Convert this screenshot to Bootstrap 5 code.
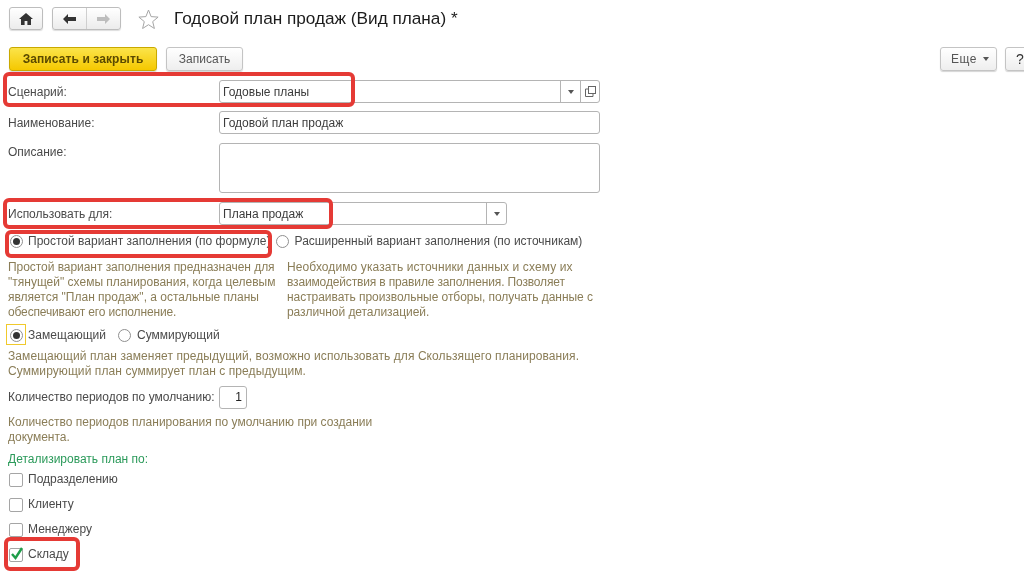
<!DOCTYPE html>
<html lang="ru">
<head>
<meta charset="utf-8">
<title>Годовой план продаж</title>
<link href="https://cdn.jsdelivr.net/npm/bootstrap@5.3.0/dist/css/bootstrap.min.css" rel="stylesheet">
<style>
html,body{height:577px;overflow:hidden;background:#fff}
body{font-family:"Liberation Sans",Arial,sans-serif;font-size:12px;color:#4a4a4a;line-height:15px}
.sheet{position:relative;width:1024px;height:577px;overflow:hidden;padding:7px 0 0 9px;filter:blur(.3px)}
.tool{height:23px;background:linear-gradient(#fff,#ececec);border:1px solid #bdbdbd;border-radius:3px;box-shadow:0 1px 1px #ddd}
.tool-home{width:34px}
.tool-nav{width:69px;margin-left:9px}
.tool-nav>div{flex:1 1 0}
.tool-nav>div+div{border-left:1px solid #cfcfcf}
.star-ico{margin-left:17px;margin-right:15px}
.form-title{font-size:17.2px;line-height:23px;color:#1c1c1c}
.cmd{margin-top:17px;height:24px}
.act{height:24px;border-radius:3px;border:1px solid #c4c4c4;background:linear-gradient(#fff,#eee);box-shadow:0 1px 1px #d5d5d5;color:#555;font-size:12px;padding:0}
.act-main{width:148px;background:linear-gradient(#fbe44a,#f5c800);border-color:#c9a900;color:#5b4a00;font-weight:700;letter-spacing:.1px}
.act-save{width:77px;margin-left:9px}
.act-more{width:57px;margin-left:auto;letter-spacing:.5px;padding-left:3px}
.act-help{width:30px;margin-left:8px;margin-right:-11px;color:#333;font-size:14px}
.caret-mini{display:inline-block;border:3px solid transparent;border-top:4px solid #555;border-bottom:0;margin-left:6px;vertical-align:2px}
.pane{margin-left:-1px}
.fld{display:flex;width:592px}
.fld-label{width:211px;flex:none;padding-top:1px}
.box{border:1px solid #b4b4b4;border-radius:3px;background:#fff;padding:0 3px;color:#3c3c3c;display:flex;align-items:center;height:23px}
.box-wide{width:381px}
.box-mid{width:288px}
.box-tall{height:50px}
.box-num{width:28px;justify-content:flex-end;padding-right:4px;font-size:12px;color:#222}
.box-text{flex:1;padding-top:1px}
.box-btn{width:20px;height:21px;border-left:1px solid #b4b4b4;display:flex;align-items:center;justify-content:center}
.box-btn:last-child{margin-right:-3px}
.box-btn.btn-open{width:19px}
.r1{margin-top:9px;height:23px;align-items:center}
.r2{margin-top:8px;height:23px;align-items:center}
.r3{margin-top:9px;height:50px}
.r3 .fld-label{padding-top:2px}
.r4{margin-top:9px;height:23px;align-items:center}
.opt{display:flex;align-items:center;height:15px}
.dot{width:13px;height:13px;border:1px solid #8f8f8f;border-radius:50%;background:#fff;margin-right:5px;flex:none;display:flex;align-items:center;justify-content:center}
.dot.on::after{content:"";width:7px;height:7px;border-radius:50%;background:#333}
.dot.far{margin-right:6px}
.tick{width:14px;height:14px;border:1px solid #a5a5a5;border-radius:2px;background:#fff;margin-right:5px;flex:none;position:relative}
.tick svg{position:absolute;left:0;top:-3px}
.hint{color:#8a7d57;white-space:nowrap}
.modes{margin-top:9px;padding-left:2px}
.opt-wide{margin-left:5px}
.hints{margin-top:11px}
.hint-a{width:279px}
.hint-b{width:320px}
.kinds{margin-top:8px;padding-left:2px;height:15px}
.opt-sum{margin-left:12px}
.lbl-first{letter-spacing:.04px}
.hint-c{margin-top:6px;width:600px;letter-spacing:.08px}
.count{margin-top:7px;height:23px;align-items:center}
.count-label{width:211px}
.hint-d{margin-top:6px;width:400px}
.sect{margin-top:7px;color:#2b9a5a}
.checks{margin-top:0;padding-left:1px}
.chk{display:flex;align-items:center;height:25px}
.ls-tight{letter-spacing:-.05px}
.ls-tighter{letter-spacing:-.15px}
.ls-up{letter-spacing:.1px}
.focus-mark{position:absolute;left:6px;top:324px;width:20px;height:21px;border:1px solid #f0c92c;pointer-events:none}
.note{position:absolute;border:4px solid #e53a35;border-radius:6px;pointer-events:none}
.n1{left:3px;top:72px;width:352px;height:35px}
.n2{left:3px;top:198px;width:330px;height:31px}
.n3{left:5px;top:230px;width:267px;height:28px}
.n4{left:4px;top:537px;width:76px;height:34px}
</style>
</head>
<body>
<div class="sheet">
  <div class="d-flex align-items-center">
    <div class="tool tool-home d-flex align-items-center justify-content-center">
      <svg width="14" height="12" viewBox="0 0 14 12"><path d="M7 0 0 6h2v6h3.600V8h2.800v4H12V6h2z" fill="#333"/></svg>
    </div>
    <div class="tool tool-nav d-flex">
      <div class="d-flex align-items-center justify-content-center"><svg width="13" height="10" viewBox="0 0 13 10"><path d="M0 5 5 0v3h8v4H5v3z" fill="#333"/></svg></div>
      <div class="d-flex align-items-center justify-content-center"><svg width="13" height="10" viewBox="0 0 13 10"><path d="M13 5 8 0v3H0v4h8v3z" fill="#bdbdbd"/></svg></div>
    </div>
    <svg class="star-ico" width="21" height="20" viewBox="0 0 21 20"><path d="M10.500 1l2.600 6.600 7 .5-5.400 4.500 1.700 6.900-5.900-3.800-5.900 3.800 1.700-6.900L.9 8.100l7-.5z" fill="#fff" stroke="#a5a5a5"/></svg>
    <div class="form-title">Годовой план продаж (Вид плана) *</div>
  </div>

  <div class="cmd d-flex">
    <button type="button" class="btn act act-main">Записать и закрыть</button>
    <button type="button" class="btn act act-save">Записать</button>
    <button type="button" class="btn act act-more">Еще<span class="caret-mini"></span></button>
    <button type="button" class="btn act act-help">?</button>
  </div>

  <div class="pane">
    <div class="fld r1">
      <div class="fld-label">Сценарий:</div>
      <div class="box box-wide">
        <span class="box-text">Годовые планы</span>
        <span class="box-btn"><span class="caret-mini m-0"></span></span>
        <span class="box-btn btn-open"><svg width="11" height="11" viewBox="0 0 11 11" fill="none" stroke="#666"><rect x="3.500" y=".5" width="7" height="7" fill="#fff"/><path d="M3.500 3H.5v7.500H8V8"/></svg></span>
      </div>
    </div>
    <div class="fld r2">
      <div class="fld-label">Наименование:</div>
      <div class="box box-wide"><span class="box-text">Годовой план продаж</span></div>
    </div>
    <div class="fld r3">
      <div class="fld-label">Описание:</div>
      <div class="box box-wide box-tall"></div>
    </div>
    <div class="fld r4">
      <div class="fld-label">Использовать для:</div>
      <div class="box box-mid">
        <span class="box-text">Плана продаж</span>
        <span class="box-btn"><span class="caret-mini m-0"></span></span>
      </div>
    </div>

    <div class="modes d-flex">
      <div class="opt"><span class="dot on"></span>Простой вариант заполнения (по формуле)</div>
      <div class="opt opt-wide"><span class="dot far"></span>Расширенный вариант заполнения (по источникам)</div>
    </div>
    <div class="hints d-flex hint">
      <div class="hint-a"><span class="ls-tight">Простой вариант заполнения предназначен для</span><br>"тянущей" схемы планирования, когда целевым<br>является "План продаж", а остальные планы<br><span class="ls-tighter">обеспечивают его исполнение.</span></div>
      <div class="hint-b"><span class="ls-up">Необходимо указать источники данных и схему их</span><br><span class="ls-tighter">взаимодействия в правиле заполнения. Позволяет</span><br><span class="ls-tight">настраивать произвольные отборы, получать данные с</span><br><span class="ls-tight">различной детализацией.</span></div>
    </div>
    <div class="kinds d-flex">
      <div class="opt lbl-first"><span class="dot on"></span>Замещающий</div>
      <div class="opt opt-sum"><span class="dot far"></span>Суммирующий</div>
    </div>
    <div class="hint hint-c">Замещающий план заменяет предыдущий, возможно использовать для Скользящего планирования.<br>Суммирующий план суммирует план с предыдущим.</div>
    <div class="count d-flex">
      <div class="count-label">Количество периодов по умолчанию:</div>
      <div class="box box-num">1</div>
    </div>
    <div class="hint hint-d">Количество периодов планирования по умолчанию при создании<br>документа.</div>
    <div class="sect">Детализировать план по:</div>
    <div class="checks">
      <div class="chk"><span class="tick"></span>Подразделению</div>
      <div class="chk"><span class="tick"></span>Клиенту</div>
      <div class="chk"><span class="tick"></span>Менеджеру</div>
      <div class="chk"><span class="tick"><svg width="14" height="15" viewBox="0 0 14 15"><path d="M2 8l3.500 4L12 2" fill="none" stroke="#1f9e4a" stroke-width="2.400"/></svg></span>Складу</div>
    </div>
  </div>

  <div class="focus-mark"></div>
  <div class="note n1"></div>
  <div class="note n2"></div>
  <div class="note n3"></div>
  <div class="note n4"></div>
</div>
<script src="https://cdn.jsdelivr.net/npm/bootstrap@5.3.0/dist/js/bootstrap.bundle.min.js"></script>
</body>
</html>
